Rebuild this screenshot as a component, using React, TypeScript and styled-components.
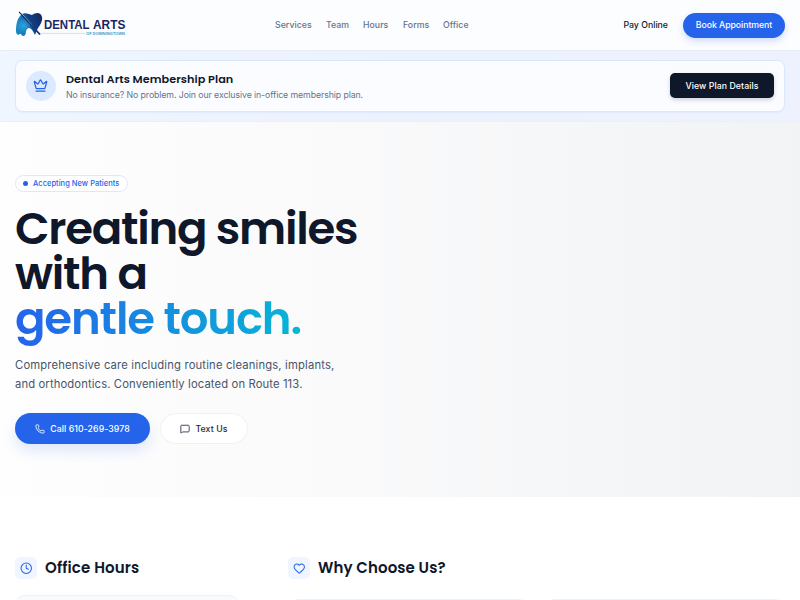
import React from "react";
import styled, { createGlobalStyle } from "styled-components";
import { Clock, Crown, Heart, MessageSquare, Phone } from "lucide-react";

const GlobalStyle = createGlobalStyle`
  *, *::before, *::after { box-sizing: border-box; }
  html, body { margin: 0; height: 100%; overflow: hidden; }
  body { background: #fff; color: #0f172a; font-family: Inter, "Liberation Sans", sans-serif; }
  h1, h2, h3, p { margin: 0; }
  button { font: inherit; cursor: pointer; padding: 0; border: 0; }
`;

const display = `Poppins, Inter, "Liberation Sans", sans-serif`;

const Page = styled.div`
  width: 800px;
  height: 600px;
  overflow: hidden;
  display: flex;
  flex-direction: column;
`;

const Header = styled.header`
  flex: none;
  height: 51px;
  padding: 0 15px;
  display: grid;
  grid-template-columns: 260px 1fr auto;
  align-items: center;
  background: #fcfdff;
  border-bottom: 1px solid #e6ebf5;
`;

const LogoArt = styled.svg`
  display: block;
  width: 112px;
  height: 28px;
`;

const Nav = styled.nav`
  display: flex;
  gap: 15px;
`;

const NavLink = styled.a<{ $w: number }>`
  width: ${(p) => p.$w}px;
  font-size: 8.75px;
  line-height: 12px;
  font-weight: 500;
  letter-spacing: 0.03px;
  color: #64748b;
  white-space: nowrap;
`;

const HeaderActions = styled.div`
  display: flex;
  align-items: center;
  gap: 15px;
  font-size: 8.75px;
  font-weight: 500;
`;

const BookButton = styled.button`
  width: 102px;
  height: 25px;
  border-radius: 13px;
  background: #2563eb;
  color: #fff;
  letter-spacing: -0.06px;
  box-shadow: 0 3px 7px rgba(37, 99, 235, 0.22);
`;

const Banner = styled.section`
  flex: none;
  height: 71px;
  padding: 9px 15px 10px;
  border-bottom: 1px solid #e9effb;
  background: linear-gradient(90deg, #eff6ff, #ecf1fe 50%, #eef2ff);
`;

const PlanCard = styled.div`
  height: 51.5px;
  padding: 0 10px 0 9.5px;
  display: flex;
  align-items: center;
  border: 1px solid #dbe7fb;
  border-radius: 7.5px;
  background: #fbfcff;
  box-shadow: 0 1px 1px rgba(37, 99, 235, 0.05);
`;

const PlanIcon = styled.div`
  width: 30px;
  height: 30px;
  margin-right: 10.5px;
  display: grid;
  place-items: center;
  border-radius: 50%;
  background: #dbeafe;
  color: #2563eb;
`;

const PlanCopy = styled.div`
  flex: 1;
  padding-top: 2px;
`;

const PlanTitle = styled.h3`
  font-family: ${display};
  font-size: 11.25px;
  line-height: 16px;
  font-weight: 600;
  letter-spacing: 0.05px;
`;

const PlanText = styled.p`
  font-size: 8.75px;
  line-height: 16px;
  letter-spacing: -0.09px;
  color: #64748b;
`;

const PlanButton = styled.button`
  width: 104px;
  height: 25px;
  border-radius: 5px;
  background: #0f172a;
  color: #fff;
  font-size: 8.75px;
  font-weight: 500;
  letter-spacing: 0.06px;
  box-shadow: 0 2px 4px rgba(15, 23, 42, 0.18);
`;

const Hero = styled.section`
  flex: none;
  height: 375px;
  padding: 53px 15px 0;
  background: linear-gradient(90deg, #fefefe 0%, #fafafb 40%, #f6f7f8 68%, #f2f3f4 100%);
`;

const Badge = styled.div`
  width: 113px;
  height: 17px;
  padding-left: 7px;
  display: flex;
  align-items: center;
  gap: 5px;
  border: 1px solid #dbe8fe;
  border-radius: 9px;
  background: #fff;
  color: #2563eb;
  font-size: 7.5px;
  font-weight: 500;
  letter-spacing: 0.03px;
  white-space: nowrap;
`;

const BadgeDot = styled.span`
  width: 5px;
  height: 5px;
  border-radius: 50%;
  background: #2563eb;
`;

const HeroTitle = styled.h1`
  margin-top: 14px;
  font-family: ${display};
  font-size: 45px;
  line-height: 45px;
  font-weight: 600;
`;

const TitleLine = styled.span<{ $tracking: number }>`
  display: block;
  width: max-content;
  letter-spacing: ${(p) => p.$tracking}px;
  white-space: nowrap;
`;

const GradientLine = styled(TitleLine)`
  padding-bottom: 5px;
  margin-bottom: -5px;
  color: transparent;
  background: linear-gradient(90deg, #2563eb, #06b6d4);
  background-clip: text;
  -webkit-background-clip: text;
`;

const HeroText = styled.p`
  margin-top: 14.5px;
  font-size: 11.25px;
  line-height: 19px;
  color: #475569;
  white-space: nowrap;
`;

const TextLine = styled.span<{ $tracking: number }>`
  display: block;
  letter-spacing: ${(p) => p.$tracking}px;
`;

const HeroActions = styled.div`
  margin-top: 19.9px;
  display: flex;
  gap: 10px;
`;

const ActionButton = styled.button<{ $primary?: boolean }>`
  width: ${(p) => (p.$primary ? 135 : 88)}px;
  height: 31px;
  display: flex;
  align-items: center;
  justify-content: center;
  gap: 5px;
  border: ${(p) => (p.$primary ? "0" : "1px solid #edf0f4")};
  border-radius: 16px;
  background: ${(p) => (p.$primary ? "#2563eb" : "#fff")};
  color: ${(p) => (p.$primary ? "#fff" : "#1e293b")};
  font-size: 8.75px;
  font-weight: 500;
  letter-spacing: 0.08px;
  box-shadow: ${(p) => (p.$primary ? "0 7px 14px rgba(37, 99, 235, 0.14)" : "none")};
`;

const InfoGrid = styled.section`
  flex: 1;
  padding: 60px 15px 0;
  display: grid;
  grid-template-columns: 223.5px 497px;
  gap: 49.5px;
`;

const SectionHead = styled.div<{ $gap: number }>`
  height: 22px;
  margin-bottom: ${(p) => p.$gap}px;
  display: flex;
  align-items: center;
  gap: 8px;
`;

const SectionIcon = styled.div`
  width: 22px;
  height: 22px;
  display: grid;
  place-items: center;
  border-radius: 5px;
  background: #eff6ff;
  color: #2563eb;
`;

const SectionTitle = styled.h2<{ $tracking: number }>`
  font-family: ${display};
  font-size: 15px;
  line-height: 20px;
  font-weight: 600;
  letter-spacing: ${(p) => p.$tracking}px;
`;

const HoursCard = styled.div`
  height: 180px;
  border: 1px solid #eef1f5;
  border-radius: 10px;
  background: #f9fafc;
`;

const ReasonGrid = styled.div`
  display: grid;
  grid-template-columns: 1fr 1fr;
  gap: 15px;
`;

const ReasonCard = styled.div`
  height: 120px;
  border: 1px solid #f0f2f4;
  border-radius: 10px;
  background: #fff;
`;

const toothPath =
  "M7 3C10 1 14 3 17 4C21 1 26 1 27 6C28 11 24 15 22 19L20 24C18 20 15 15 12 18C10 20 12 25 8 25C6 25 6 22 5 23C3 25 1 23 1 20C1 14 2 7 7 3Z";

function Logo() {
  return (
    <LogoArt viewBox="0 0 112 28" role="img" aria-label="Dental Arts of Downingtown">
      <defs>
        <linearGradient id="tooth" x1="0" y1="0.7" x2="1" y2="0.3">
          <stop offset="0" stopColor="#1685c4" />
          <stop offset="0.35" stopColor="#1475bd" />
          <stop offset="0.6" stopColor="#123f86" />
          <stop offset="1" stopColor="#142966" />
        </linearGradient>
        <radialGradient id="shine" cx="0.3" cy="0.55" r="0.35">
          <stop offset="0" stopColor="#35b5e2" stopOpacity="0.75" />
          <stop offset="1" stopColor="#35b5e2" stopOpacity="0" />
        </radialGradient>
      </defs>
      <path d={toothPath} fill="url(#tooth)" />
      <path d={toothPath} fill="url(#shine)" />
      <path d="M6.5 2.4L18 15.5" stroke="#c9dcee" strokeWidth=".8" />
      <path d="M4 .8L25 23.5" stroke="#172554" strokeWidth="1.1" />
      <path d="M16 13.8L25 23.5" stroke="#183d79" strokeWidth="1.8" />
      <path d="M26 22.4H70" stroke="#a8d3e5" strokeWidth=".6" />
      <text x="29" y="18.2" fontFamily="Liberation Sans, sans-serif" fontWeight="700" fontSize="12" fill="#1e2765" textLength="45.5" lengthAdjust="spacingAndGlyphs">DENTAL</text>
      <text x="78" y="18.2" fontFamily="Liberation Sans, sans-serif" fontWeight="700" fontSize="12" fill="#1a2260" textLength="32.3" lengthAdjust="spacingAndGlyphs">ARTS</text>
      <text x="71" y="24" fontFamily="Liberation Sans, sans-serif" fontWeight="700" fontSize="4.3" fill="#419bc8" textLength="39" lengthAdjust="spacingAndGlyphs">OF DOWNINGTOWN</text>
    </LogoArt>
  );
}

const links = [
  { label: "Services", width: 36 },
  { label: "Team", width: 22 },
  { label: "Hours", width: 25 },
  { label: "Forms", width: 25 },
  { label: "Office", width: 25 },
];

export default function App() {
  return (
    <>
      <GlobalStyle />
      <Page>
        <Header>
          <Logo />
          <Nav>
            {links.map((l) => (
              <NavLink key={l.label} $w={l.width}>{l.label}</NavLink>
            ))}
          </Nav>
          <HeaderActions>
            <span>Pay Online</span>
            <BookButton>Book Appointment</BookButton>
          </HeaderActions>
        </Header>

        <Banner>
          <PlanCard>
            <PlanIcon><Crown size={15} strokeWidth={2} /></PlanIcon>
            <PlanCopy>
              <PlanTitle>Dental Arts Membership Plan</PlanTitle>
              <PlanText>No insurance? No problem. Join our exclusive in-office membership plan.</PlanText>
            </PlanCopy>
            <PlanButton>View Plan Details</PlanButton>
          </PlanCard>
        </Banner>

        <Hero>
          <Badge><BadgeDot />Accepting New Patients</Badge>
          <HeroTitle>
            <TitleLine $tracking={-1.25}>Creating smiles</TitleLine>
            <TitleLine $tracking={-1.2}>with a</TitleLine>
            <GradientLine $tracking={-1.15}>gentle touch.</GradientLine>
          </HeroTitle>
          <HeroText>
            <TextLine $tracking={0.16}>Comprehensive care including routine cleanings, implants,</TextLine>
            <TextLine $tracking={0.12}>and orthodontics. Conveniently located on Route 113.</TextLine>
          </HeroText>
          <HeroActions>
            <ActionButton $primary><Phone size={10} strokeWidth={2} />Call 610-269-3978</ActionButton>
            <ActionButton><MessageSquare size={10} strokeWidth={2} />Text Us</ActionButton>
          </HeroActions>
        </Hero>

        <InfoGrid>
          <div>
            <SectionHead $gap={16}>
              <SectionIcon><Clock size={12.5} /></SectionIcon>
              <SectionTitle $tracking={0.14}>Office Hours</SectionTitle>
            </SectionHead>
            <HoursCard />
          </div>
          <div>
            <SectionHead $gap={20}>
              <SectionIcon><Heart size={12.5} /></SectionIcon>
              <SectionTitle $tracking={0.1}>Why Choose Us?</SectionTitle>
            </SectionHead>
            <ReasonGrid>
              <ReasonCard />
              <ReasonCard />
            </ReasonGrid>
          </div>
        </InfoGrid>
      </Page>
    </>
  );
}
